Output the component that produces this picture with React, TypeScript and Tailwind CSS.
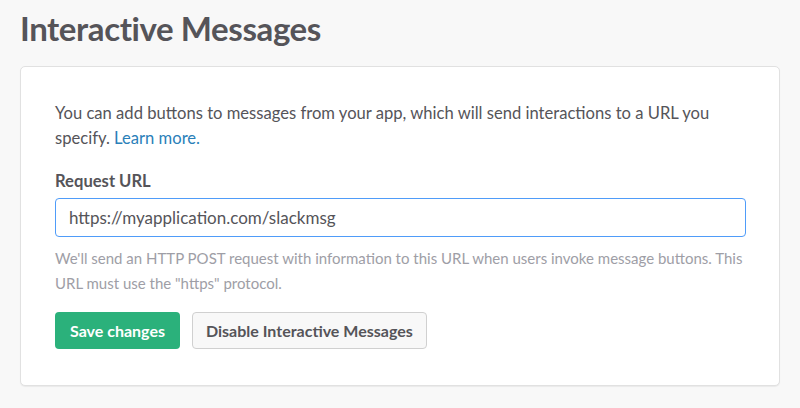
export default function App() {
  return (
    <div className="min-h-[408px] w-[800px] bg-[#f8f8f8] px-5 pt-[5px] font-['Lato',sans-serif] text-[#555459]">
      <h1 className="text-[33px] font-bold leading-[46px] tracking-[-0.4px]">Interactive Messages</h1>
      <div className="mt-[15px] rounded-[5px] border border-[#e1e1e1] bg-white px-[34px] pb-[36px] pt-[34px] shadow-[0_1px_1px_rgba(0,0,0,0.06)]">
        <p className="text-[16.6px] leading-[25px]">
          You can add buttons to messages from your app, which will send interactions to a URL you specify.{" "}
          <a className="text-[#2a80b9]">Learn more.</a>
        </p>
        <label className="mt-[18px] block text-[16.6px] font-bold leading-[25px]">Request URL</label>
        <div className="mt-[4px] flex h-[39px] w-[691px] items-center rounded-[4px] border border-[#4f9cf9] px-[13px] text-[17px]">
          https://myapplication.com/slackmsg
        </div>
        <p className="mt-[9px] text-[15px] leading-[25px] text-[#9e9ea6]">
          We'll send an HTTP POST request with information to this URL when users invoke message buttons. This URL must use the "https" protocol.
        </p>
        <div className="mt-[16px] flex gap-[12px]">
          <button className="h-[37px] rounded-[4px] bg-[#2bb17b] px-[15px] text-[16px] font-bold text-white">Save changes</button>
          <button className="h-[37px] rounded-[4px] border border-[#d0d0d0] bg-[#f8f8f8] px-[13px] text-[16px] font-bold text-[#555459]">
            Disable Interactive Messages
          </button>
        </div>
      </div>
    </div>
  )
}
